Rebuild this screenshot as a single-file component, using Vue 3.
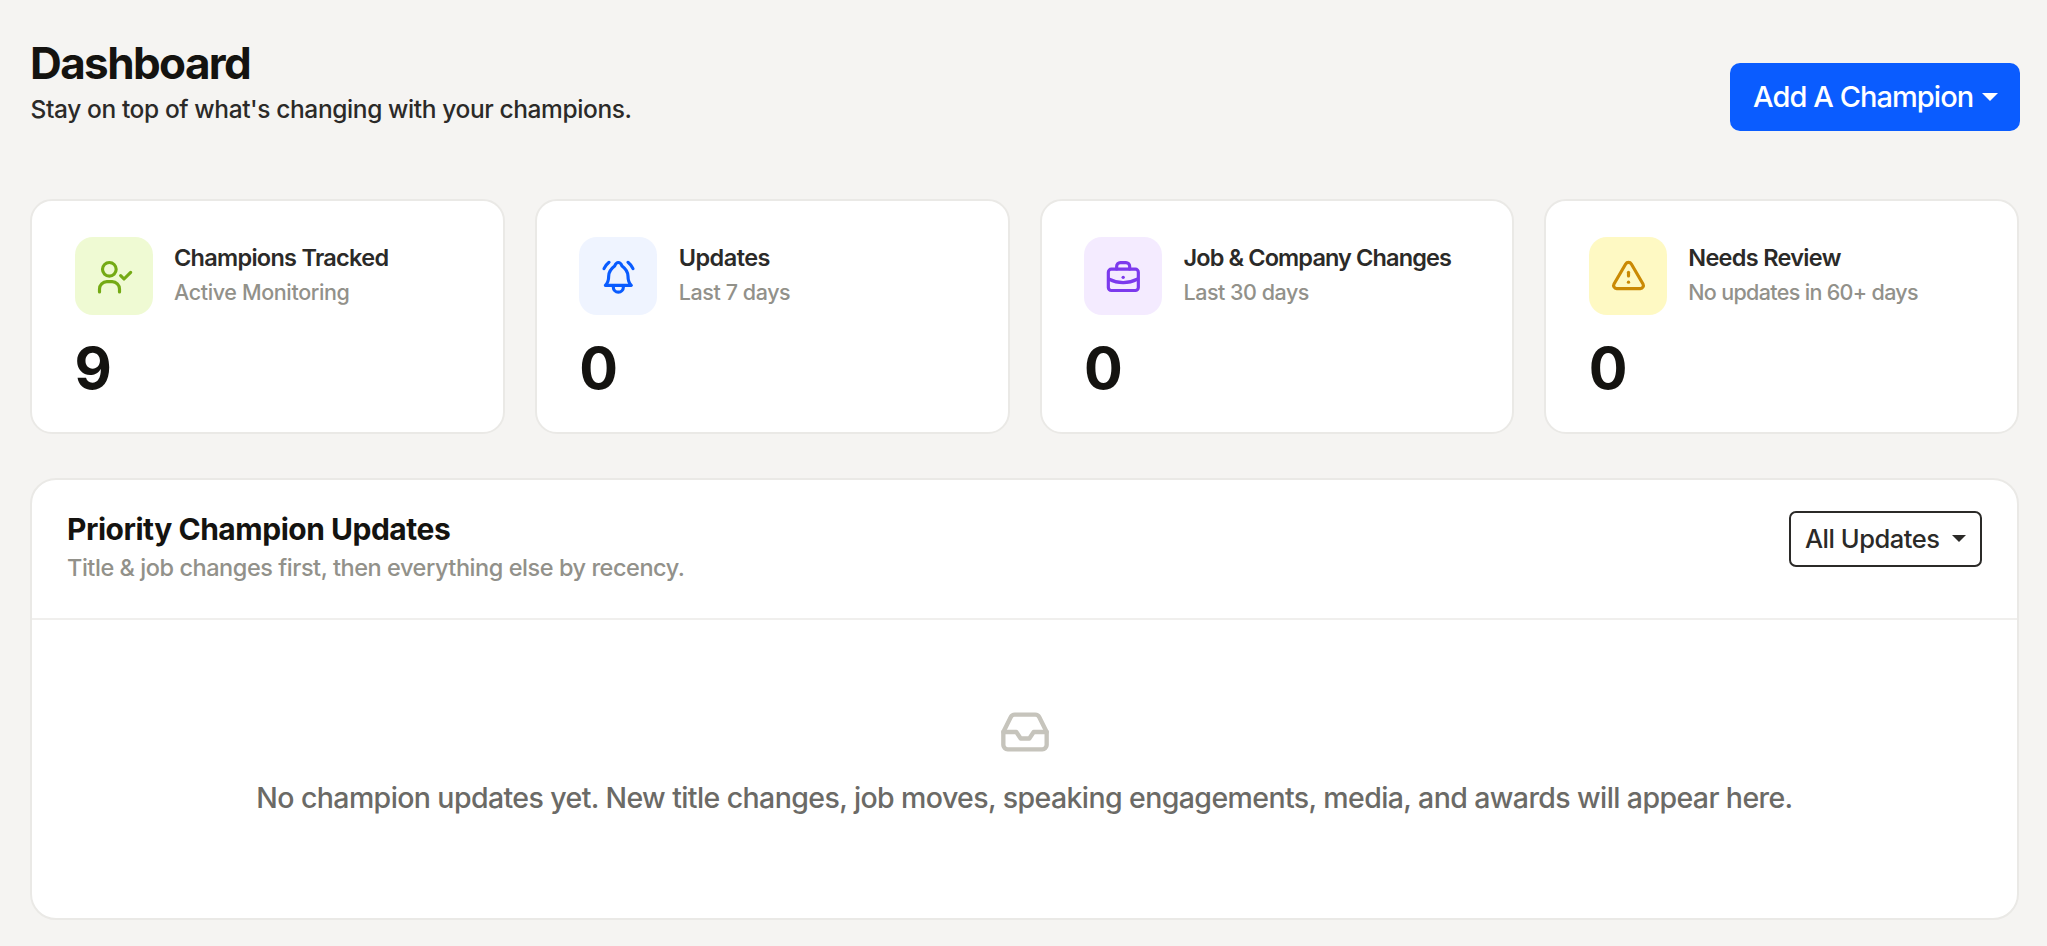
<script setup>
const cards = [
  { key: 'tracked', title: 'Champions Tracked', note: 'Active Monitoring', value: 9 },
  { key: 'updates', title: 'Updates', note: 'Last 7 days', value: 0 },
  { key: 'changes', title: 'Job & Company Changes', note: 'Last 30 days', value: 0 },
  { key: 'review', title: 'Needs Review', note: 'No updates in 60+ days', value: 0 },
]
</script>

<template>
  <main class="page">
    <header class="header">
      <div>
        <h1>Dashboard</h1>
        <p class="lead">Stay on top of what's changing with your champions.</p>
      </div>
      <button class="add" type="button">
        <span>Add A Champion</span>
        <svg class="add-caret" viewBox="0 0 16 8"><path d="M0 0H16L8 8Z" /></svg>
      </button>
    </header>

    <section class="cards">
      <article v-for="card in cards" :key="card.key" class="card" :class="card.key">
        <div class="card-head">
          <div class="tile">
            <svg viewBox="0 0 234 234">
              <g v-if="card.key === 'tracked'">
                <circle cx="103" cy="97" r="20.5" />
                <path d="M73.5 165v-9a22 22 0 0 1 22-22h16a22 22 0 0 1 22 22v9" />
                <path d="M137 116l10 10 20-20" />
              </g>
              <g v-else-if="card.key === 'updates'">
                <path d="M79 145C86 139 89 132 89 118C89 104 96 95 107 87C110 79 114 76.5 118 76.5C122 76.5 126 79 129 87C140 95 147 104 147 118C147 132 150 139 157 145Z" />
                <path d="M103 148v2.500a15 15 0 0 0 30 0v-2.500" />
                <path d="M90 76Q81 83 75 95M147 76Q156 83 162 95" />
              </g>
              <g v-else-if="card.key === 'changes'">
                <rect x="73" y="96.500" width="90" height="64" rx="9" />
                <path d="M98 96v-8a11 11 0 0 1 11-11h17a11 11 0 0 1 11 11v8" />
                <path d="M74 126Q117.500 148 161 126" />
                <circle class="dot" cx="117.500" cy="121" r="5" />
              </g>
              <g v-else>
                <path d="M110 81a10 10 0 0 1 17 0L162 141a9.500 9.500 0 0 1-8 14H83a9.500 9.500 0 0 1-8-14Z" />
                <path d="M118.500 106v11" />
                <circle class="dot" cx="118.500" cy="135.500" r="5" />
              </g>
            </svg>
          </div>
          <div class="labels">
            <h2>{{ card.title }}</h2>
            <p>{{ card.note }}</p>
          </div>
        </div>
        <div class="value">{{ card.value }}</div>
      </article>
    </section>

    <section class="panel">
      <div class="panel-head">
        <div>
          <h2>Priority Champion Updates</h2>
          <p>Title &amp; job changes first, then everything else by recency.</p>
        </div>
        <button class="filter" type="button">
          <span>All Updates</span>
          <svg class="filter-caret" viewBox="0 0 14 7"><path d="M0 0H14L7 7Z" /></svg>
        </button>
      </div>
      <div class="empty">
        <svg viewBox="0 0 24 24">
          <path d="M22 12h-6l-2 3h-4l-2-3H2" />
          <path d="M5.450 5.110 2 12v6a2 2 0 0 0 2 2h16a2 2 0 0 0 2-2v-6l-3.450-6.890A2 2 0 0 0 16.760 4H7.240a2 2 0 0 0-1.790 1.110z" />
        </svg>
        <p>No champion updates yet. New title changes, job moves, speaking engagements, media, and awards will appear here.</p>
      </div>
    </section>
  </main>
</template>

<style>
body {
  background: #f5f4f2;
}
</style>

<style scoped>
.page {
  box-sizing: border-box;
  height: 946px;
  padding: 37px 28px 0 30px;
  background: #f5f4f2;
  color: #141310;
  font-family: Inter, "Noto Sans", sans-serif;
  font-weight: 500;
}
h1, h2, p {
  margin: 0;
}
button {
  box-sizing: border-box;
  display: flex;
  align-items: center;
  font-family: inherit;
  font-weight: inherit;
  white-space: nowrap;
}
button svg {
  flex: none;
}
.header {
  display: flex;
  justify-content: space-between;
  align-items: flex-start;
  height: 162px;
}
h1 {
  font-size: 44px;
  line-height: 52px;
  font-weight: 700;
  letter-spacing: -1.6px;
}
.lead {
  margin-left: 0.5px;
  font-size: 24.5px;
  line-height: 40px;
  letter-spacing: -0.39px;
  color: #2b2a28;
}
.add {
  width: 289.5px;
  height: 68px;
  margin: 26px -0.5px 0 0;
  padding: 0 23px 1px;
  gap: 9px;
  border: 0;
  border-radius: 10px;
  background: #0a5cff;
  color: #fff;
  font-size: 29px;
  letter-spacing: -0.93px;
}
.add-caret {
  width: 16px;
  height: 8px;
  fill: #fff;
}
.cards {
  display: grid;
  grid-template-columns: repeat(4, 1fr);
  gap: 30px;
}
.card {
  box-sizing: border-box;
  height: 235px;
  padding: 35.5px 20px 0 42.5px;
  border: 2px solid #eae9e6;
  border-radius: 22px;
  background: #fff;
}
.card-head {
  display: flex;
  align-items: center;
  gap: 21.5px;
}
.tile {
  width: 78px;
  height: 78px;
  border-radius: 18px;
}
.tile svg {
  display: block;
  fill: none;
  stroke: currentColor;
  stroke-width: 9.5;
  stroke-linecap: round;
  stroke-linejoin: round;
}
.tile .dot {
  fill: currentColor;
  stroke: none;
}
.tracked .tile { background: #effad3; color: #74aa14; }
.updates .tile { background: #eff4ff; color: #0a5cff; }
.changes .tile { background: #f4ebff; color: #7c3aed; }
.review .tile { background: #fef9c3; color: #ca8a04; }
.labels {
  margin-bottom: 1px;
  white-space: nowrap;
}
.labels h2 {
  font-size: 23.5px;
  line-height: 35px;
  font-weight: 600;
  color: #2b2a28;
}
.labels p {
  font-size: 21.5px;
  line-height: 35px;
  color: #92918a;
}
.tracked h2 { letter-spacing: -0.72px; }
.updates h2 { letter-spacing: -0.55px; }
.changes h2 { letter-spacing: -0.88px; }
.review h2 { letter-spacing: -0.7px; }
.tracked p { letter-spacing: -0.37px; }
.updates p { letter-spacing: -0.42px; }
.changes p { letter-spacing: -0.48px; }
.review p { letter-spacing: -0.67px; }
.value {
  margin-top: 24px;
  font-size: 57.5px;
  line-height: 58px;
  font-weight: 700;
  letter-spacing: -1px;
}
.panel {
  box-sizing: border-box;
  height: 442px;
  margin-top: 43.5px;
  border: 2px solid #eae9e6;
  border-radius: 26px;
  background: #fff;
}
.panel-head {
  box-sizing: border-box;
  display: flex;
  justify-content: space-between;
  align-items: flex-start;
  height: 140px;
  padding: 29px 35px 0 35px;
  border-bottom: 2px solid #f0efed;
}
.panel-head h2 {
  font-size: 30px;
  line-height: 40px;
  font-weight: 700;
  letter-spacing: -0.48px;
}
.panel-head p {
  font-size: 23.5px;
  line-height: 38px;
  letter-spacing: -0.45px;
  color: #92918a;
}
.filter {
  width: 193px;
  height: 56px;
  margin-top: 2px;
  padding: 0 14px 1px;
  gap: 12.5px;
  border: 2px solid #2b2a28;
  border-radius: 7px;
  background: #fff;
  color: #2b2a28;
  font-size: 25.5px;
  letter-spacing: -0.48px;
}
.filter-caret {
  width: 14px;
  height: 7px;
  fill: #2b2a28;
}
.empty {
  display: flex;
  flex-direction: column;
  align-items: center;
  gap: 19px;
  padding-top: 86px;
}
.empty svg {
  width: 52px;
  height: 52px;
  fill: none;
  stroke: #c6c4bc;
  stroke-width: 2;
  stroke-linecap: round;
  stroke-linejoin: round;
}
.empty p {
  font-size: 28.5px;
  line-height: 42px;
  letter-spacing: -0.6px;
  white-space: nowrap;
  color: #6b6a66;
}
</style>
